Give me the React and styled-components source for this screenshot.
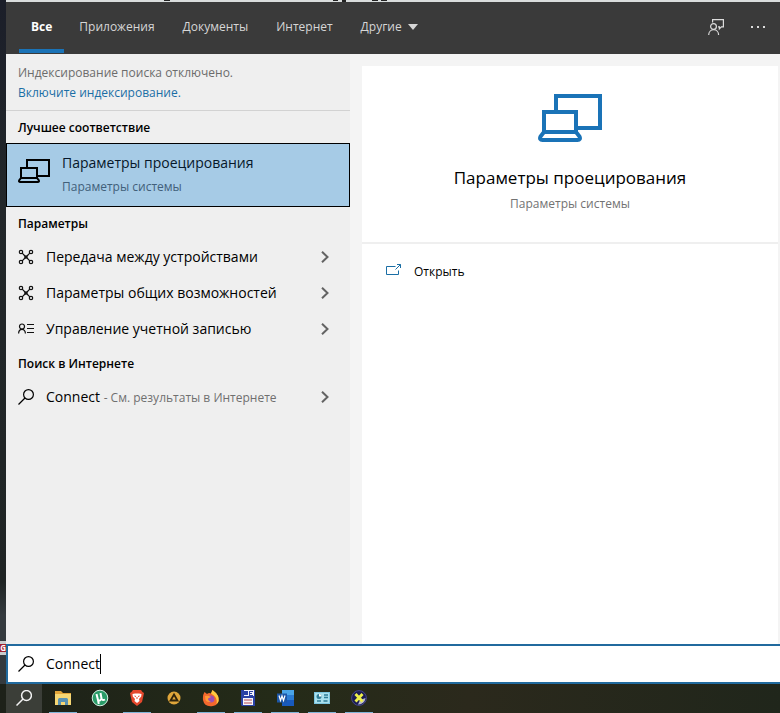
import { useState } from "react";
import styled, { createGlobalStyle } from "styled-components";

const GlobalStyle = createGlobalStyle`
  * {
    box-sizing: border-box;
  }

  body {
    margin: 0;
    background: #20251c;
    font-family: "Open Sans", "Noto Sans", sans-serif;
    font-size: 12px;
    line-height: 20px;
    color: #000;
  }

  button,
  input {
    font: inherit;
    color: inherit;
    border: 0;
    padding: 0;
    margin: 0;
    background: none;
  }

  h2,
  h1,
  p,
  ul {
    margin: 0;
    padding: 0;
  }

  svg {
    display: block;
    flex-shrink: 0;
  }
`;

const Screen = styled.div`
  min-height: 100vh;
  display: flex;
  flex-direction: column;
`;

const Desktop = styled.div`
  flex: 1;
  display: flex;
`;

const DesktopEdge = styled.div`
  width: 6px;
  flex-shrink: 0;
  display: flex;
  flex-direction: column;
  justify-content: flex-end;
  padding-bottom: 29px;
  background: linear-gradient(#1b1e29, #22272a 30%, #1f2424 85%, #343a3e 90%);
  overflow: hidden;
`;

const EdgeBadge = styled.span`
  height: 14px;
  display: flex;
  justify-content: flex-end;
  border: solid #c9cccd;
  border-width: 3px 0;
  background: #a3212f;
  color: #fff;
  font-size: 8px;
  line-height: 8px;
  font-weight: 700;
`;

const SearchWindow = styled.div`
  flex: 1;
  min-width: 0;
  display: flex;
  flex-direction: column;
`;

const WindowBehind = styled.div`
  height: 2px;
  background: #d9dddd;
`;

const Header = styled.header`
  height: 52px;
  padding: 0 14px 0 13px;
  display: flex;
  justify-content: space-between;
  background: #3a3a3a;
`;

const Tabs = styled.nav`
  display: flex;
  gap: 2px;
`;

const Tab = styled.button`
  display: flex;
  align-items: center;
  gap: 6px;
  padding: ${({ $active }) => ($active ? "3px 12px 0" : "3px 13px 4px")};
  border-bottom: ${({ $active }) => ($active ? "4px solid #1a73b7" : "0")};
  margin-bottom: 1px;
  color: ${({ $active }) => ($active ? "#fff" : "#d6d6d6")};
  font-weight: ${({ $active }) => ($active ? 700 : 400)};
`;

const HeaderTools = styled.div`
  display: flex;
  align-items: center;
  gap: 26px;
  padding-bottom: 2px;
  color: #dcdcdc;
`;

const Body = styled.main`
  flex: 1;
  display: flex;
  background: #f4f4f4;
`;

const Results = styled.section`
  flex: 0 0 344px;
  background: #efefef;
`;

const Notice = styled.div`
  padding: 9px 12px 7px;
  border-bottom: 1px solid #d2d2d2;
  color: #6c6c6c;
`;

const NoticeLink = styled.a`
  color: #1a6ea5;
  text-decoration: none;
`;

const GroupTitle = styled.h2`
  padding: 1px 12px 0;
  font-size: 12px;
  line-height: 31px;
  font-weight: 600;
`;

const BestMatch = styled.button`
  width: 100%;
  height: 64px;
  padding: 0 11px;
  display: flex;
  align-items: center;
  gap: 12px;
  border: 1px solid #000;
  background: #a6cbe6;
  text-align: left;
`;

const MatchIcon = styled.span`
  align-self: flex-start;
  padding-top: 15px;
`;

const MatchText = styled.span`
  display: flex;
  flex-direction: column;
  gap: 4px;
`;

const MatchName = styled.span`
  font-size: 14px;
  color: #06182a;
`;

const MatchKind = styled.span`
  color: #41607a;
`;

const ResultList = styled.ul`
  list-style: none;
`;

const ResultButton = styled.button`
  width: 100%;
  height: 36px;
  padding: 0 20px 0 12px;
  display: flex;
  align-items: center;
  gap: 12px;
  font-size: 14px;
  text-align: left;
`;

const ResultLabel = styled.span`
  flex: 1;
  white-space: nowrap;
`;

const ResultHint = styled.span`
  font-size: 12px;
  color: #6f6f6f;
`;

const Preview = styled.section`
  flex: 1;
  margin: 12px 2px 0 12px;
  background: #fff;
`;

const PreviewHead = styled.div`
  padding: 28px 12px 28px;
  display: flex;
  flex-direction: column;
  align-items: center;
  border-bottom: 2px solid #efefef;
`;

const PreviewTitle = styled.h1`
  margin-top: 24px;
  font-size: 17px;
  line-height: 24px;
  font-weight: 400;
`;

const PreviewKind = styled.p`
  margin-top: 4px;
  line-height: 20px;
  color: #737373;
`;

const ActionButton = styled.button`
  padding: 18px 24px;
  display: flex;
  align-items: center;
  gap: 12px;
`;

const SearchBar = styled.label`
  height: 40px;
  padding: 0 10px;
  display: flex;
  align-items: center;
  gap: 12px;
  border: 2px solid #216a9e;
  border-right: 0;
  background: #fff;
  font-size: 14px;
`;

const Query = styled.span`
  display: flex;
  align-items: center;
`;

const SearchInput = styled.input`
  field-sizing: content;
  outline: none;
  caret-color: transparent;
`;

const Caret = styled.span`
  width: 1px;
  height: 20px;
  background: #000;
`;

const Taskbar = styled.footer`
  height: 29px;
  padding-left: 6px;
  display: flex;
  background: linear-gradient(90deg, #1d2119, #242b18 35%, #2b291c 60%, #20261b);
`;

const TaskButton = styled.button`
  width: ${({ $search }) => ($search ? "36px" : "28px")};
  margin-right: ${({ $search }) => ($search ? "7px" : "9px")};
  display: flex;
  align-items: center;
  justify-content: center;
  background: ${({ $search }) => ($search ? "#3b3e38" : "none")};
  border-bottom: 1px solid ${({ $running }) => ($running ? "#7fb4d8" : "transparent")};
  color: #f2f2f2;
`;

const ProjectIcon = ({ width, color }) => (
  <svg width={width} height={width * 0.75} viewBox="0 0 64 48" fill="none" stroke={color} strokeWidth="4">
    <path d="M18 16V2H62V34H40" />
    <path d="M6 38V18H38V38" />
    <path d="M6 38H38L41.5 42.5Q43 46 39.5 46H4.500Q1 46 2.500 42.500Z" />
  </svg>
);

const SearchIcon = ({ strokeWidth = 1.2 }) => (
  <svg width="16" height="16" viewBox="0 0 16 16" fill="none" stroke="currentColor" strokeWidth={strokeWidth}>
    <circle cx="10.500" cy="5.500" r="4.900" />
    <path d="M7 9L.5 15.500" />
  </svg>
);

const NodesIcon = () => (
  <svg width="16" height="16" viewBox="0 0 16 16" fill="none" stroke="#111" strokeWidth="1.200">
    <circle cx="3" cy="3" r="1.700" />
    <circle cx="13" cy="3" r="1.700" />
    <circle cx="3" cy="13" r="1.700" />
    <circle cx="13" cy="13" r="1.700" />
    <path d="M4.200 4.200L7 7M11.800 4.200L9 7M4.200 11.800L7 9M11.800 11.800L9 9" />
    <circle cx="8" cy="8" r="1.200" fill="#111" />
  </svg>
);

const AccountIcon = () => (
  <svg width="16" height="16" viewBox="0 0 16 16" fill="none" stroke="#111" strokeWidth="1.200">
    <circle cx="4" cy="5.500" r="2.500" />
    <path d="M.6 12.500C.6 6.900 7.400 6.900 7.400 12.500M9 3.500h7M9 7.500h7M9 11.500h7" />
  </svg>
);

const ChevronIcon = () => (
  <svg width="10" height="12" viewBox="0 0 10 12" fill="none" stroke="#636363" strokeWidth="2">
    <path d="M2 .8L7.500 6L2 11.200" />
  </svg>
);

const FeedbackIcon = () => (
  <svg width="16" height="16" viewBox="0 0 16 16" fill="none" stroke="currentColor" strokeWidth="1.200">
    <path d="M4.600 3.500V.6h10.800v7.200h-2l-2 2V7.800h-1.400" />
    <circle cx="5.500" cy="7.500" r="2.900" />
    <path d="M.7 16C.7 9 10.600 9 10.600 16" />
  </svg>
);

const MoreIcon = () => (
  <svg width="16" height="16" viewBox="0 0 16 16" fill="currentColor">
    <path d="M1 7h2v2H1zM7 7h2v2H7zM13 7h2v2h-2z" />
  </svg>
);

const OpenIcon = () => (
  <svg width="16" height="16" viewBox="0 0 16 16" fill="none" stroke="#1a6ea5" strokeWidth="1">
    <path d="M9.500 2.500H.5v8h12V6.500M9.500 5.500l5-5M11 .5h3.500V4" />
  </svg>
);

const ExplorerIcon = () => (
  <svg width="18" height="16" viewBox="0 0 18 16">
    <path d="M1 1h6l2 2h8v4H1z" fill="#e2a53a" />
    <path d="M1 4h16v11H1z" fill="#f6d774" />
    <path d="M4 15V9.500Q4 8 5.500 8h7Q14 8 14 9.500V15h-3v-3H7v3z" fill="#5a93b4" />
  </svg>
);

const TorrentIcon = () => (
  <svg width="18" height="18" viewBox="0 0 18 18" fill="none">
    <circle cx="9" cy="9" r="7.800" fill="#2a9b68" stroke="#d5efe2" />
    <path d="M5.500 5L7 11Q9.500 12.500 10.500 9.500L9.500 4M10.500 9.500Q11.500 12 14 10.500M7 11L7.800 15" stroke="#fff" strokeWidth="2" />
  </svg>
);

const BraveIcon = () => (
  <svg width="16" height="18" viewBox="0 0 16 18">
    <path d="M4 1h8l1.500 2L15 4l-.6 3-1.400 6L8 17 3 13 1.600 7 1 4l1.500-1z" fill="#e5482d" />
    <path d="M3.500 5L6 4.500h4l2.500.5-.3 2.500L10 10l.5 2L8 14l-2.500-2 .5-2-2.200-2.500z" fill="#fff" />
    <path d="M5.500 7l1.500.5M10.500 7L9 7.500M8 8v2" stroke="#e5482d" fill="none" />
  </svg>
);

const AimpIcon = () => (
  <svg width="16" height="16" viewBox="0 0 16 16">
    <circle cx="8" cy="8" r="6.500" fill="#e0a63a" />
    <path d="M8 4.500L11.500 10.500H4.500z" fill="none" stroke="#30240c" strokeWidth="1.800" />
  </svg>
);

const FirefoxIcon = () => (
  <svg width="18" height="18" viewBox="0 0 18 18">
    <path d="M2.500 3L5 5Q7 3.500 9 4.500L10.500 1Q12 3 14 4L16 7Q18.500 15 11 17Q2.500 18.500 1 11Q.5 6 2.500 3z" fill="#f4682d" />
    <path d="M10.500 1Q13 3 14 4L16 7Q18 12 14.500 15Q16 8 9 4.500z" fill="#ffc940" />
    <circle cx="8.800" cy="10" r="3.600" fill="#9a4fb3" />
    <path d="M3 7Q6 6 9 8L6 9.500Q6 12 9 12.500Q5 14 3.500 11z" fill="#ff9a36" />
  </svg>
);

const SaveIcon = () => (
  <svg width="16" height="16" viewBox="0 0 16 16">
    <path d="M1 0h14v16H2l-1-1z" fill="#2b42a5" />
    <path d="M4 0h10v6H4zM3 8h10v7H3z" fill="#f4f4fa" />
    <path d="M4 1h4v4H4zM9 1h4v1h-3v1h2v1h-2v1h3v1H9z" fill="#2b42a5" />
    <path d="M4 10h8M4 13h8" stroke="#b64a53" />
  </svg>
);

const WordIcon = () => (
  <svg width="17" height="16" viewBox="0 0 17 16">
    <path d="M5 0h12v5H5z" fill="#4aa5e8" />
    <path d="M5 5h12v5H5z" fill="#2b7cd3" />
    <path d="M5 10h12v6H5z" fill="#185abd" />
    <path d="M0 3.500h10v9H0z" fill="#1c56a6" />
    <path d="M2 5.500L3.500 10.500L5 6L6.500 10.500L8 5.500" fill="none" stroke="#fff" strokeWidth="1.200" />
  </svg>
);

const PanelIcon = () => (
  <svg width="16" height="14" viewBox="0 0 16 14">
    <path d="M0 1h16v12H0z" fill="#7cc5df" />
    <path d="M1 2h14v10H1z" fill="#a9e0ee" />
    <circle cx="5" cy="5.500" r="2.500" fill="#2f7c96" />
    <path d="M5 5.500V3a2.500 2.500 0 0 1 2.500 2.500z" fill="#fff" />
    <path d="M10 4h4M10 6.500h4M3 10h4M9.500 10h4" stroke="#2f7c96" strokeWidth="1.400" />
  </svg>
);

const CrossIcon = () => (
  <svg width="16" height="16" viewBox="0 0 16 16" fill="none">
    <circle cx="8" cy="8" r="7.400" fill="#1b1c52" stroke="#45478c" />
    <path d="M14.500 8A7 7 0 0 1 7 14.500L9 10z" fill="#b9bac9" />
    <path d="M4.500 4L11.500 11.500M11.500 4L4.500 11.500" stroke="#eef04a" strokeWidth="2.800" />
  </svg>
);

const settings = [
  { label: "Передача между устройствами", icon: <NodesIcon /> },
  { label: "Параметры общих возможностей", icon: <NodesIcon /> },
  { label: "Управление учетной записью", icon: <AccountIcon /> },
];

const apps = [
  { name: "Проводник", icon: <ExplorerIcon />, running: true },
  { name: "uTorrent", icon: <TorrentIcon /> },
  { name: "Brave", icon: <BraveIcon />, running: true },
  { name: "AIMP", icon: <AimpIcon /> },
  { name: "Firefox", icon: <FirefoxIcon />, running: true },
  { name: "Total Commander", icon: <SaveIcon />, running: true },
  { name: "Word", icon: <WordIcon />, running: true },
  { name: "Панель управления", icon: <PanelIcon />, running: true },
  { name: "Утилита", icon: <CrossIcon />, running: true },
];

const tabs = ["Все", "Приложения", "Документы", "Интернет", "Другие"];

const Result = ({ icon, children }) => (
  <li>
    <ResultButton type="button">
      {icon}
      <ResultLabel>{children}</ResultLabel>
      <ChevronIcon />
    </ResultButton>
  </li>
);

const App = () => {
  const [activeTab, setActiveTab] = useState("Все");
  const [query, setQuery] = useState("Connect");

  return (
    <Screen>
      <GlobalStyle />
      <Desktop>
        <DesktopEdge>
          <EdgeBadge>G</EdgeBadge>
        </DesktopEdge>
        <SearchWindow>
          <WindowBehind>
            <svg width="400" height="2" fill="#222">
              <path d="M158 0h6v1h-6zM327 0h5v1h-5zM336 0h4v2h-4zM366 0h6v1h-6zM375 0h6v1h-6z" />
            </svg>
          </WindowBehind>
          <Header>
            <Tabs>
              {tabs.map((tab) => (
                <Tab key={tab} type="button" $active={tab === activeTab} onClick={() => setActiveTab(tab)}>
                  {tab}
                  {tab === "Другие" && (
                    <svg width="10" height="6" viewBox="0 0 10 6" fill="currentColor">
                      <path d="M0 0h10L5 6z" />
                    </svg>
                  )}
                </Tab>
              ))}
            </Tabs>
            <HeaderTools>
              <button type="button" aria-label="Отзыв">
                <FeedbackIcon />
              </button>
              <button type="button" aria-label="Ещё">
                <MoreIcon />
              </button>
            </HeaderTools>
          </Header>

          <Body>
            <Results>
              <Notice>
                <p>Индексирование поиска отключено.</p>
                <NoticeLink href="#indexing">Включите индексирование.</NoticeLink>
              </Notice>

              <GroupTitle>Лучшее соответствие</GroupTitle>
              <BestMatch type="button">
                <MatchIcon>
                  <ProjectIcon width={32} color="#000" />
                </MatchIcon>
                <MatchText>
                  <MatchName>Параметры проецирования</MatchName>
                  <MatchKind>Параметры системы</MatchKind>
                </MatchText>
              </BestMatch>

              <GroupTitle>Параметры</GroupTitle>
              <ResultList>
                {settings.map(({ label, icon }) => (
                  <Result key={label} icon={icon}>
                    {label}
                  </Result>
                ))}
              </ResultList>

              <GroupTitle>Поиск в Интернете</GroupTitle>
              <ResultList>
                <Result icon={<SearchIcon />}>
                  {query} <ResultHint>- См. результаты в Интернете</ResultHint>
                </Result>
              </ResultList>
            </Results>

            <Preview>
              <PreviewHead>
                <ProjectIcon width={64} color="#1a73b7" />
                <PreviewTitle>Параметры проецирования</PreviewTitle>
                <PreviewKind>Параметры системы</PreviewKind>
              </PreviewHead>
              <ActionButton type="button">
                <OpenIcon />
                Открыть
              </ActionButton>
            </Preview>
          </Body>

          <SearchBar>
            <SearchIcon />
            <Query>
              <SearchInput
                type="text"
                aria-label="Поиск"
                value={query}
                onChange={(e) => setQuery(e.target.value)}
              />
              <Caret />
            </Query>
          </SearchBar>
        </SearchWindow>
      </Desktop>

      <Taskbar>
        <TaskButton type="button" aria-label="Поиск" $search>
          <SearchIcon strokeWidth={1.5} />
        </TaskButton>
        {apps.map(({ name, icon, running }) => (
          <TaskButton key={name} type="button" aria-label={name} $running={running}>
            {icon}
          </TaskButton>
        ))}
      </Taskbar>
    </Screen>
  );
};

export default App;
